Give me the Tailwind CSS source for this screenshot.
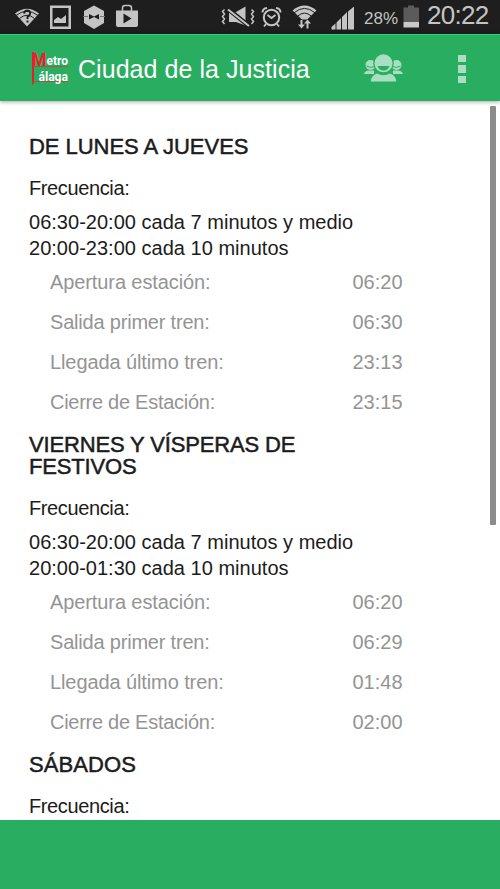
<!DOCTYPE html>
<html lang="es">
<head>
  <meta charset="UTF-8" />
  <meta name="viewport" content="width=device-width, initial-scale=1.0"/>
  <title>Metro Málaga</title>
  <script src="https://cdn.jsdelivr.net/npm/@tailwindcss/browser@4"></script>
</head>
<body class="h-[889px] w-[500px] overflow-hidden flex flex-col bg-white font-['Liberation_Sans',Arial,sans-serif] text-[#1c1c1c]">

<!-- Status bar -->
<div class="h-[34px] shrink-0 bg-[#1e1e1e] flex items-start text-[#c4c4c4]">
  <!-- notifications -->
  <svg class="w-[150px] h-[34px] shrink-0" viewBox="0 0 150 34" fill="currentColor">
    <path d="M15 13.500Q27 4 39 13.500L27 26.500Z"/>
    <path d="M16 15.500Q27 7 38 15.500M19.500 18.500Q27 12 34.500 18.500" fill="none" stroke="#1e1e1e" stroke-width="1"/>
    <path d="M24 13.500Q24.500 10.500 27.500 10.500Q30.500 11 30 14Q29.500 15.500 27.500 17V19M27.500 20.500V22.500" fill="none" stroke="#1e1e1e" stroke-width="2"/>
    <path fill-rule="evenodd" d="M50 5.500H71V29H50ZM52.500 8V26.500H68.500V8Z"/>
    <path d="M54 23V20L58 17L61 19L66 15V23Z"/>
    <path d="M94 5.500L104 11V23L94 29L84 23V11Z"/>
    <path d="M83 16.500H88M100 16.500H105" stroke="#777" stroke-width="1"/>
    <path d="M89 14L94 16.500L99 14V19.500L94 17L89 19.500Z" fill="#1e1e1e"/>
    <path d="M116 10.500H138V25Q138 27 136 27H118Q116 27 116 25Z"/>
    <path d="M122.500 11V8Q122.500 5.500 125 5.500H129Q131.500 5.500 131.500 8V11" fill="none" stroke="currentColor" stroke-width="1.500"/>
    <path d="M123.500 13.500L131.500 18.500L123.500 23.500Z" fill="#1e1e1e"/>
  </svg>
  <!-- system -->
  <svg class="ml-[70px] w-[136px] h-[34px] shrink-0" viewBox="220 0 136 34" fill="currentColor">
    <path d="M224.500 9.500L222.500 11.500L224.500 14L222.500 16.500L224.500 19L222.500 21.500L224.500 24M251.500 9.500L253.500 11.500L251.500 14L253.500 16.500L251.500 19L253.500 21.500L251.500 24" fill="none" stroke="currentColor" stroke-width="1.500"/>
    <path d="M229 12H236L245.500 6.500V25.500L236 22H229Z"/>
    <path d="M228 9L249 26" stroke="#1e1e1e" stroke-width="4.500"/>
    <path d="M228 9.500L249 26" stroke="currentColor" stroke-width="2"/>
    <circle cx="271.500" cy="17.500" r="7.700" fill="none" stroke="currentColor" stroke-width="2"/>
    <path d="M267.500 15L271.500 18L275.500 15M266 24L264 26.500M277 24L279 26.500M262.500 12.500Q262.500 8.500 267 8M280.500 12.500Q280.500 8.500 276 8" fill="none" stroke="currentColor" stroke-width="1.900"/>
    <path d="M292.500 10.500Q304.500 0.500 316.500 10.500L304.500 22Z"/>
    <path d="M294 12.800Q304.500 4 315 12.800M297.500 16.200Q304.500 10 311.500 16.200" fill="none" stroke="#1e1e1e" stroke-width="1"/>
    <path d="M297 19.500H312V31H297Z" fill="#1e1e1e"/>
    <path d="M301.500 20V25M307.500 28.500V22" stroke="currentColor" stroke-width="2"/>
    <path d="M298 24.500H305L301.500 28.500ZM304 23.500H311L307.500 19.500Z"/>
    <path d="M331.500 29.500V27L335.500 23.500V29.500ZM336.500 29.500V22.500L341 18V29.500ZM342 29.500V17L347 12V29.500ZM348 29.500V11.500L354 6.500V29.500Z"/>
  </svg>
  <span class="ml-[8px] mt-[8px] w-[39px] whitespace-nowrap text-[17px] leading-[21px] tracking-[0.1px]">28%</span>
  <svg class="w-[17px] h-[34px] shrink-0" viewBox="403 0 17 34">
    <path d="M403.500 7.500H408V5.500H414V7.500H419V22H403.500Z" fill="#5b5b5b"/>
    <path d="M403.500 22H419V27.500H403.500Z" fill="#c9c9c9"/>
  </svg>
  <span class="ml-[7px] mt-px whitespace-nowrap text-[26px] leading-[28px] tracking-[-0.7px]">20:22</span>
</div>

<!-- App bar -->
<header class="relative z-10 h-[67px] shrink-0 bg-[#29ae61] border-t border-[#34d37a] flex items-center pt-[2px] pl-[31px] text-white shadow-[0_1px_4px_rgba(0,0,0,0.35)]">
  <svg class="w-[38px] h-[46px] shrink-0 overflow-visible" viewBox="31 45 38 46" font-family="Roboto, sans-serif" font-weight="bold">
    <path d="M32 51H34V82L32 84Z" fill="#e3202a"/>
    <path d="M33 65.500H68M33 80.500H68" stroke="#a8543a" stroke-width="1"/>
    <text x="32" y="64.500" font-size="19" fill="#f01c2c" textLength="14.500" lengthAdjust="spacingAndGlyphs">M</text>
    <text x="46.500" y="64.300" font-size="12.500" fill="#fff" textLength="21.500" lengthAdjust="spacingAndGlyphs">etro</text>
    <text x="38.500" y="79.500" font-size="12.500" fill="#fff" textLength="29.500" lengthAdjust="spacingAndGlyphs">álaga</text>
  </svg>
  <h1 class="ml-[9px] w-[286px] whitespace-nowrap text-[25px] leading-[30px] tracking-[0.05px]">Ciudad de la Justicia</h1>
  <svg class="w-[40px] h-[30px] shrink-0" viewBox="364 54 40 30" fill="#a9dfc0">
    <circle cx="370.500" cy="65" r="5"/>
    <circle cx="396.500" cy="65" r="5"/>
    <path d="M364 74Q365 70.500 369 70.500H374V74ZM403 74Q402 70.500 398 70.500H393V74Z"/>
    <path d="M366.500 66Q370 68.500 375 66.500M400.500 66Q397 68.500 392 66.500" fill="none" stroke="#29ae61" stroke-width="1"/>
    <circle cx="383.500" cy="63.300" r="10.300" fill="#29ae61"/>
    <circle cx="383.500" cy="63.300" r="9"/>
    <path d="M377.500 66H389.500Q388 70.500 383.500 70.500Q379 70.500 377.500 66Z" fill="#29ae61"/>
    <path d="M370 82Q371 75 377 73Q383.500 76.500 390 73Q396 75 397 82Z" stroke="#29ae61" stroke-width="1"/>
  </svg>
  <div class="ml-[54px] flex flex-col gap-[3px]">
    <span class="w-[8px] h-[7px] bg-[#a9dfc0]"></span>
    <span class="w-[8px] h-[8px] bg-[#a9dfc0]"></span>
    <span class="w-[8px] h-[7px] bg-[#a9dfc0]"></span>
  </div>
</header>

<!-- Timetable -->
<main class="relative h-[719px] shrink-0 overflow-hidden pt-[35px] pl-[29px] text-[20px] leading-[26px]">
  <section>
    <h2 class="w-[300px] text-[22px] leading-[22px] tracking-[-0.04px] [-webkit-text-stroke:0.5px]">DE LUNES A JUEVES</h2>
    <p class="mt-[17px] tracking-[-0.38px]">Frecuencia:</p>
    <p class="mt-[8px] tracking-[0.02px]">06:30-20:00 cada 7 minutos y medio<br>20:00-23:00 cada 10 minutos</p>
    <dl class="mt-px ml-[21px] grid grid-cols-[302.5px_auto] auto-rows-[40px] items-center text-[#949494]">
      <dt class="tracking-[-0.1px]">Apertura estación:</dt><dd>06:20</dd>
      <dt class="tracking-[-0.2px]">Salida primer tren:</dt><dd>06:30</dd>
      <dt class="tracking-[-0.1px]">Llegada último tren:</dt><dd>23:13</dd>
      <dt class="tracking-[-0.27px]">Cierre de Estación:</dt><dd>23:15</dd>
    </dl>
  </section>
  <section class="mt-[12px]">
    <h2 class="w-[300px] text-[22px] leading-[22px] tracking-[-0.15px] [-webkit-text-stroke:0.5px]">VIERNES Y VÍSPERAS DE FESTIVOS</h2>
    <p class="mt-[17px] tracking-[-0.38px]">Frecuencia:</p>
    <p class="mt-[8px] tracking-[0.02px]">06:30-20:00 cada 7 minutos y medio<br>20:00-01:30 cada 10 minutos</p>
    <dl class="mt-px ml-[21px] grid grid-cols-[302.5px_auto] auto-rows-[40px] items-center text-[#949494]">
      <dt class="tracking-[-0.1px]">Apertura estación:</dt><dd>06:20</dd>
      <dt class="tracking-[-0.2px]">Salida primer tren:</dt><dd>06:29</dd>
      <dt class="tracking-[-0.1px]">Llegada último tren:</dt><dd>01:48</dd>
      <dt class="tracking-[-0.27px]">Cierre de Estación:</dt><dd>02:00</dd>
    </dl>
  </section>
  <section class="mt-[12px]">
    <h2 class="w-[300px] text-[22px] leading-[22px] tracking-[0.1px] [-webkit-text-stroke:0.5px]">SÁBADOS</h2>
    <p class="mt-[17px] tracking-[-0.38px]">Frecuencia:</p>
  </section>
  <!-- scrollbar -->
  <div class="absolute top-[5px] right-[4px] h-[419px] w-[6px] rounded-[1px] bg-[#8c8c8c]"></div>
</main>

<footer class="h-[69px] shrink-0 bg-[#29ae61]"></footer>

</body>
</html>
